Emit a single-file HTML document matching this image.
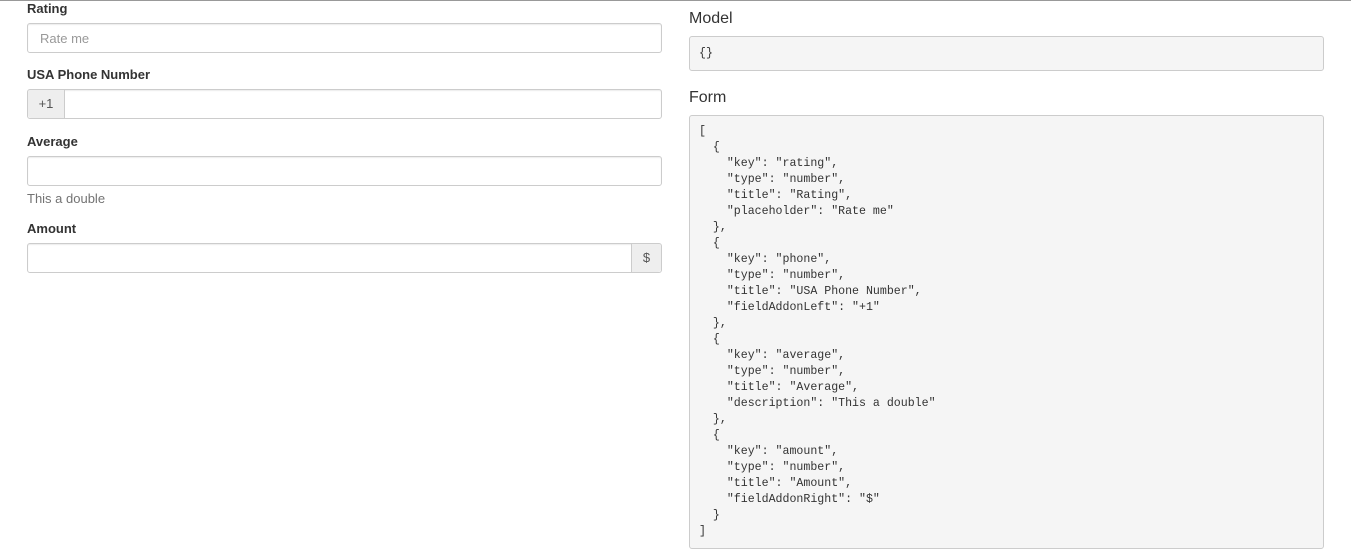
<!DOCTYPE html>
<html><head><meta charset="utf-8"><style>
body{margin:0;background:#fff;font-family:"Liberation Sans",sans-serif;color:#333;width:1351px;height:550px;overflow:hidden;position:relative}
.top{position:absolute;left:0;top:0;width:1351px;height:1px;background:#999}
.abs{position:absolute}
.lbl{font-weight:bold;font-size:13px;left:27px}
.inp{left:27px;width:633px;height:28px;border:1px solid #ccc;border-radius:3px;box-shadow:inset 0 1px 1px rgba(0,0,0,.075)}
.add{position:absolute;top:0;height:28px;background:#eee;font-size:13px;color:#555;line-height:28px;text-align:center}
.h{font-size:16px;left:689px;color:#333}
pre{position:absolute;margin:0;left:689px;width:615px;padding:9px;background:#f5f5f5;border:1px solid #ccc;border-radius:3px;font-family:"Liberation Mono",monospace;font-size:11.6px;line-height:16px;color:#333}
</style></head><body>
<div class="top"></div>
<div class="abs lbl" style="top:1px">Rating</div>
<div class="abs inp" style="top:23px"><span style="position:absolute;left:12px;top:7px;font-size:13px;color:#999">Rate me</span></div>
<div class="abs lbl" style="top:67px">USA Phone Number</div>
<div class="abs inp" style="top:89px"><div class="add" style="left:0;width:36px;border-right:1px solid #ccc;border-radius:3px 0 0 3px">+1</div></div>
<div class="abs lbl" style="top:134px">Average</div>
<div class="abs inp" style="top:156px"></div>
<div class="abs" style="left:27px;top:191px;font-size:13px;color:#737373">This a double</div>
<div class="abs lbl" style="top:221px">Amount</div>
<div class="abs inp" style="top:243px"><div class="add" style="right:0;width:29px;border-left:1px solid #ccc;border-radius:0 3px 3px 0">$</div></div>
<div class="abs h" style="top:10px">Model</div>
<pre style="top:36px;height:15px;padding-top:9px">{}</pre>
<div class="abs h" style="top:89px">Form</div>
<pre style="top:115px;height:415px;padding-top:8px">[
  {
    "key": "rating",
    "type": "number",
    "title": "Rating",
    "placeholder": "Rate me"
  },
  {
    "key": "phone",
    "type": "number",
    "title": "USA Phone Number",
    "fieldAddonLeft": "+1"
  },
  {
    "key": "average",
    "type": "number",
    "title": "Average",
    "description": "This a double"
  },
  {
    "key": "amount",
    "type": "number",
    "title": "Amount",
    "fieldAddonRight": "$"
  }
]</pre>
</body></html>
